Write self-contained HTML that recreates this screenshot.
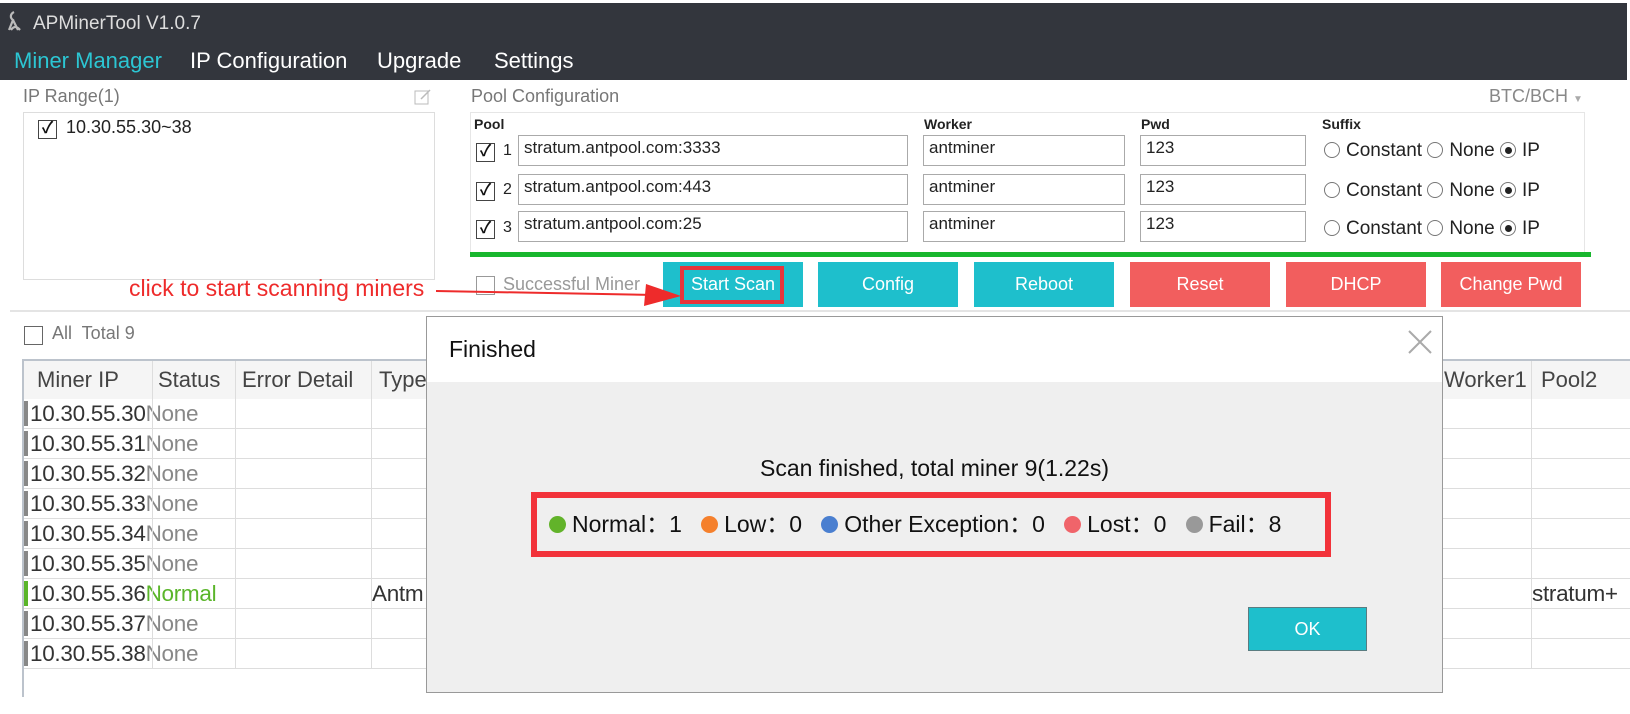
<!DOCTYPE html>
<html><head><meta charset="utf-8"><style>
*{margin:0;padding:0;box-sizing:border-box}
body{width:1630px;height:714px;overflow:hidden;background:#fff;font-family:"Liberation Sans","Noto Sans CJK SC",sans-serif;position:relative;color:#222}
.a{position:absolute;white-space:nowrap}
.cb{position:absolute;width:19px;height:19px;border:1.5px solid #444;background:#fff;font-size:16px;line-height:16px;text-align:center;color:#111;font-weight:bold}
.in{position:absolute;border:1px solid #aaa;background:#fff;font-size:17px;padding:2px 5px;height:31px}
.btn{position:absolute;top:262px;height:45px;width:140px;color:#fff;font-size:18px;text-align:center;line-height:45px}
.t{background:#1ebfcc}.r{background:#f25e5e}
.rd{display:inline-block;width:16px;height:16px;border:1px solid #777;border-radius:50%;vertical-align:-2px;margin-right:6px;position:relative}
.rd.on::after{content:"";position:absolute;left:3.5px;top:3.5px;width:7px;height:7px;border-radius:50%;background:#222}
.row{position:absolute;left:24px;width:1606px;height:30px;border-bottom:1px solid #ddd;font-size:22.5px;color:#333;line-height:30px;letter-spacing:-0.3px}
.dot{display:inline-block;width:17px;height:17px;border-radius:50%;vertical-align:-1px;margin-right:6px}
</style></head><body>
<div class="a" style="left:0;top:3px;width:1627px;height:77px;background:#33363d"></div>
<svg class="a" style="left:6px;top:10px" width="20" height="24" viewBox="0 0 20 24"><path d="M8 2 C4 4 4 8 7 10 L3 20 M7 10 L12 20 M5 20 Q9 14 14 20" stroke="#bbb" stroke-width="2.2" fill="none"/></svg>
<div class="a" style="left:33px;top:13px;font-size:19px;color:#ddd">APMinerTool V1.0.7</div>
<div class="a" style="left:14px;top:48px;font-size:22px;color:#2cc6d3">Miner Manager</div>
<div class="a" style="left:190px;top:48px;font-size:22px;color:#fff">IP Configuration</div>
<div class="a" style="left:377px;top:48px;font-size:22px;color:#fff">Upgrade</div>
<div class="a" style="left:494px;top:48px;font-size:22px;color:#fff">Settings</div>

<div class="a" style="left:23px;top:86px;font-size:18px;color:#777">IP Range(1)</div>
<svg class="a" style="left:414px;top:88px" width="18" height="18"><rect x="1" y="3" width="13" height="13" fill="none" stroke="#bbb"/><path d="M7 11 L16 2" stroke="#bbb" stroke-width="1.5"/></svg>
<div class="a" style="left:23px;top:112px;width:412px;height:168px;border:1px solid #ddd"></div>
<div class="cb" style="left:38px;top:120px">✓</div>
<div class="a" style="left:66px;top:117px;font-size:18px">10.30.55.30~38</div>

<div class="a" style="left:471px;top:86px;font-size:18px;color:#777">Pool Configuration</div>
<div class="a" style="left:1489px;top:86px;font-size:18px;color:#888">BTC/BCH <span style="font-size:10px;color:#aaa">▼</span></div>
<div class="a" style="left:470px;top:112px;width:1115px;height:141px;border:1px solid #e6e6e6"></div>
<div class="a" style="left:474px;top:116px;font-size:14px;font-weight:bold">Pool</div>
<div class="a" style="left:924px;top:116px;font-size:14px;font-weight:bold">Worker</div>
<div class="a" style="left:1141px;top:116px;font-size:14px;font-weight:bold">Pwd</div>
<div class="a" style="left:1322px;top:116px;font-size:14px;font-weight:bold">Suffix</div>

<div class="cb" style="left:476px;top:143px">✓</div><div class="a" style="left:503px;top:142px;font-size:16px">1</div>
<div class="in" style="left:518px;top:135px;width:390px">stratum.antpool.com:3333</div>
<div class="in" style="left:923px;top:135px;width:202px">antminer</div>
<div class="in" style="left:1140px;top:135px;width:166px">123</div>
<div class="a" style="left:1324px;top:140px;font-size:19px"><span class="rd"></span>Constant <span class="rd"></span>None <span class="rd on"></span>IP</div>

<div class="cb" style="left:476px;top:182px">✓</div><div class="a" style="left:503px;top:181px;font-size:16px">2</div>
<div class="in" style="left:518px;top:174px;width:390px">stratum.antpool.com:443</div>
<div class="in" style="left:923px;top:174px;width:202px">antminer</div>
<div class="in" style="left:1140px;top:174px;width:166px">123</div>
<div class="a" style="left:1324px;top:180px;font-size:19px"><span class="rd"></span>Constant <span class="rd"></span>None <span class="rd on"></span>IP</div>

<div class="cb" style="left:476px;top:220px">✓</div><div class="a" style="left:503px;top:219px;font-size:16px">3</div>
<div class="in" style="left:518px;top:211px;width:390px">stratum.antpool.com:25</div>
<div class="in" style="left:923px;top:211px;width:202px">antminer</div>
<div class="in" style="left:1140px;top:211px;width:166px">123</div>
<div class="a" style="left:1324px;top:218px;font-size:19px"><span class="rd"></span>Constant <span class="rd"></span>None <span class="rd on"></span>IP</div>

<div class="a" style="left:470px;top:252px;width:1121px;height:5px;background:#18b62e"></div>
<div class="cb" style="left:476px;top:276px;border-color:#999"></div>
<div class="a" style="left:503px;top:274px;font-size:18px;color:#999">Successful Miner</div>
<div class="btn t" style="left:663px">Start Scan</div>
<div class="btn t" style="left:818px">Config</div>
<div class="btn t" style="left:974px">Reboot</div>
<div class="btn r" style="left:1130px">Reset</div>
<div class="btn r" style="left:1286px">DHCP</div>
<div class="btn r" style="left:1441px">Change Pwd</div>
<div class="a" style="left:680px;top:266px;width:104px;height:38px;border:4px solid #e8343a"></div>
<div class="a" style="left:129px;top:275px;font-size:23px;color:#ee2b2b">click to start scanning miners</div>
<svg class="a" style="left:436px;top:280px" width="250" height="30"><path d="M0 11 L220 15" stroke="#ee2b2b" stroke-width="2"/><path d="M210 4 L245 16 L208 26 Z" fill="#ee2b2b"/></svg>

<div class="a" style="left:10px;top:310px;width:1620px;height:2px;background:#e4e4e4"></div>
<div class="cb" style="left:24px;top:326px;border-color:#666"></div>
<div class="a" style="left:52px;top:323px;font-size:18px;color:#777">All&nbsp; Total 9</div>

<div class="a" style="left:22px;top:359px;width:1608px;height:2px;background:#bcc3cc"></div>
<div class="a" style="left:22px;top:359px;width:2px;height:338px;background:#bcc3cc"></div>
<div class="a" style="left:24px;top:361px;width:1606px;height:38px;background:#f5f5f5;font-size:22px;color:#444;line-height:38px">
<span class="a" style="left:13px">Miner IP</span><span class="a" style="left:134px">Status</span><span class="a" style="left:218px">Error Detail</span><span class="a" style="left:355px">Type</span><span class="a" style="left:1420px">Worker1</span><span class="a" style="left:1517px">Pool2</span></div>
<div class="row" style="top:399px"><span style="border-left:4px solid #888;padding-left:2px">10.30.55.30</span><span style="color:#888">None</span></div>
<div class="row" style="top:429px"><span style="border-left:4px solid #888;padding-left:2px">10.30.55.31</span><span style="color:#888">None</span></div>
<div class="row" style="top:459px"><span style="border-left:4px solid #888;padding-left:2px">10.30.55.32</span><span style="color:#888">None</span></div>
<div class="row" style="top:489px"><span style="border-left:4px solid #888;padding-left:2px">10.30.55.33</span><span style="color:#888">None</span></div>
<div class="row" style="top:519px"><span style="border-left:4px solid #888;padding-left:2px">10.30.55.34</span><span style="color:#888">None</span></div>
<div class="row" style="top:549px"><span style="border-left:4px solid #888;padding-left:2px">10.30.55.35</span><span style="color:#888">None</span></div>
<div class="row" style="top:579px"><span style="border-left:4px solid #5ab52a;padding-left:2px">10.30.55.36</span><span style="color:#5ab52a">Normal</span><span class="a" style="left:348px">Antm</span><span class="a" style="left:1508px">stratum+</span></div>
<div class="row" style="top:609px"><span style="border-left:4px solid #888;padding-left:2px">10.30.55.37</span><span style="color:#888">None</span></div>
<div class="row" style="top:639px"><span style="border-left:4px solid #888;padding-left:2px">10.30.55.38</span><span style="color:#888">None</span></div>
<div class="a" style="left:152px;top:361px;width:1px;height:308px;background:#ddd"></div>
<div class="a" style="left:235px;top:361px;width:1px;height:308px;background:#ddd"></div>
<div class="a" style="left:371px;top:361px;width:1px;height:308px;background:#ddd"></div>
<div class="a" style="left:1531px;top:361px;width:1px;height:308px;background:#ddd"></div>

<div class="a" style="left:426px;top:316px;width:1017px;height:377px;border:1px solid #999;background:#efefef">
<div class="a" style="left:0;top:0;width:1015px;height:65px;background:#fff"></div>
<div class="a" style="left:22px;top:19px;font-size:23px;color:#111">Finished</div>
<svg class="a" style="left:980px;top:12px" width="26" height="26"><path d="M2 2 L24 24 M24 2 L2 24" stroke="#aaa" stroke-width="2"/></svg>
<div class="a" style="left:0;top:138px;width:1015px;text-align:center;font-size:23px;color:#111">Scan finished, total miner 9(1.22s)</div>
<div class="a" style="left:104px;top:175px;width:800px;height:65px;border:6px solid #f2323a;font-size:23px;color:#111;line-height:53px;padding-left:12px">
<span class="dot" style="background:#62b32a"></span>Normal：1&nbsp;&nbsp;&nbsp;<span class="dot" style="background:#f5802c"></span>Low：0&nbsp;&nbsp;&nbsp;<span class="dot" style="background:#4a7fd0"></span>Other Exception：0&nbsp;&nbsp;&nbsp;<span class="dot" style="background:#f0646a"></span>Lost：0&nbsp;&nbsp;&nbsp;<span class="dot" style="background:#999"></span>Fail：8</div>
<div class="a" style="left:821px;top:290px;width:119px;height:44px;background:#1ebfcc;border:1px solid #5a7c80;color:#fff;font-size:18px;text-align:center;line-height:42px">OK</div>
</div>
</body></html>
